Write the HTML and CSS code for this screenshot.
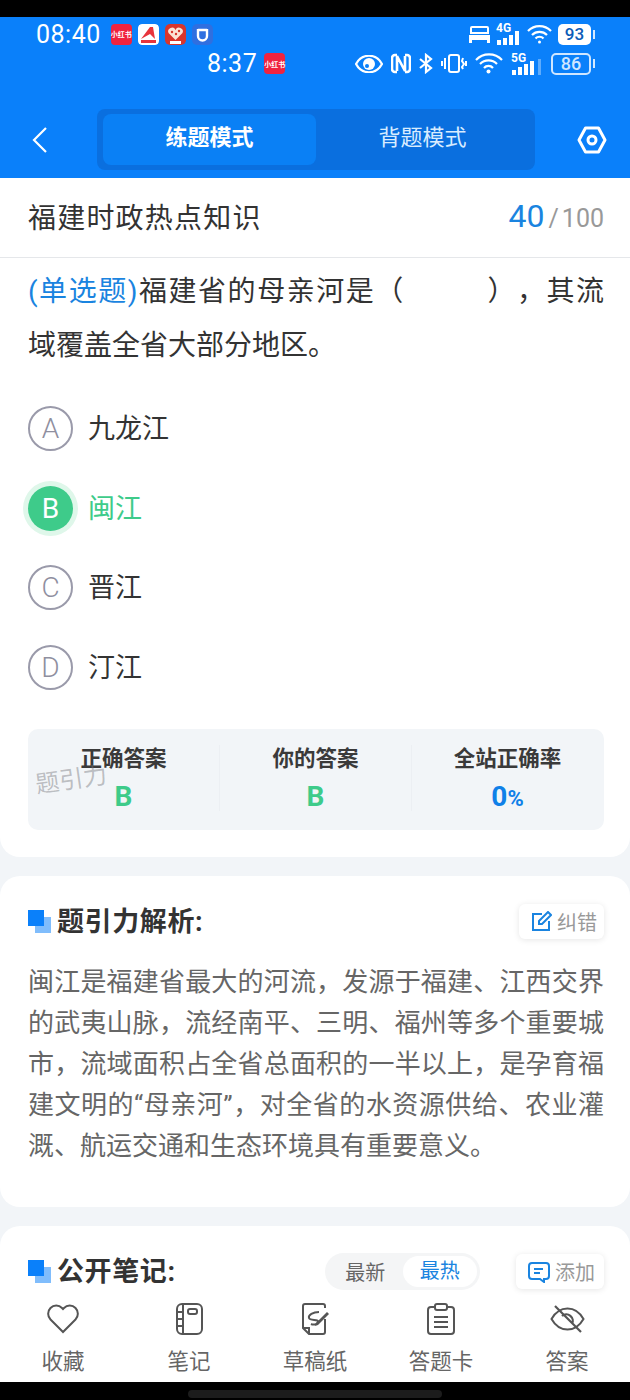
FILE: index.html
```html
<!DOCTYPE html>
<html lang="zh-CN">

<head>
    <meta charset="UTF-8">
    <meta name="viewport" content="width=device-width, initial-scale=1.0">
    <title>福建时政热点知识</title>
    <link rel="stylesheet" href="styles.css">
</head>

<body>
    <div class="black-top"></div>

    <!-- Blue header with the two status rows -->
    <div class="header">
        <div class="status-row first">
            <span class="clock">08:40</span>
            <span class="app-icon red">小红书</span>
            <svg class="app-icon" viewBox="0 0 21 21"><rect width="21" height="21" rx="4" fill="#fff"/><path d="M3 15 12 3h3l2 12-5-5z" fill="#e8343c"/><rect x="3" y="16" width="15" height="3" fill="#e8343c"/></svg>
            <svg class="app-icon" viewBox="0 0 21 21"><rect width="21" height="21" rx="5" fill="#d9352c"/><path d="M10.500 16 3.500 9a3.800 3.800 0 0 1 7-3 3.800 3.800 0 0 1 7 3z" fill="#fbe3d5"/><circle cx="7" cy="8" r="1.200" fill="#d9352c"/><circle cx="11" cy="10" r="1.200" fill="#d9352c"/><circle cx="14" cy="7" r="1.200" fill="#d9352c"/><rect x="5" y="17" width="11" height="3" fill="#fff"/></svg>
            <svg class="app-icon" viewBox="0 0 21 21"><rect width="21" height="21" rx="5" fill="#2f6fe0"/><path d="M6 5v7a4.500 4.500 0 0 0 9 0V5M6 6h9" fill="none" stroke="#fff" stroke-width="2.400"/></svg>
            <span class="status-right">
                <svg width="21" height="17" viewBox="0 0 21 17"><path d="M3 1h15a1 1 0 0 1 1 1v5H2V2a1 1 0 0 1 1-1z" fill="none" stroke="#fff" stroke-width="2"/><path d="M0 9h21v8h-3v-3H3v3H0z" fill="#fff"/></svg>
                <span class="signal">
                    <b>4G</b>
                    <svg width="25" height="14" viewBox="0 0 25 14"><rect x="1" y="9" width="4" height="5" fill="#fff"/><rect x="7" y="7" width="4" height="7" fill="#fff"/><rect x="13" y="4" width="4" height="10" fill="#fff"/><rect x="19" y="0" width="4" height="14" fill="#fff"/></svg>
                </span>
                <svg width="25" height="21" viewBox="0 0 25 21" fill="none" stroke="#fff" stroke-width="2.200"><path d="M1 7a16 16 0 0 1 23 0M5 11a10.500 10.500 0 0 1 15 0M8.500 14.500a5.500 5.500 0 0 1 8 0"/><circle cx="12.500" cy="18" r="1.500" fill="#fff" stroke="none"/></svg>
                <span class="battery-full">93</span>
            </span>
        </div>
        <div class="status-row second">
            <span class="clock">8:37</span>
            <span class="app-icon red">小红书</span>
            <span class="status-right">
                <svg width="28" height="18" viewBox="0 0 28 18"><path d="M1 9c6-11 20-11 26 0-6 11-20 11-26 0z" fill="none" stroke="#fff" stroke-width="2.200"/><circle cx="14" cy="9" r="6" fill="#fff"/><circle cx="12" cy="11" r="2" fill="#0a80fa"/></svg>
                <svg width="20" height="21" viewBox="0 0 20 21" fill="none" stroke="#fff" stroke-width="2.600"><path d="M6 2H4a3 3 0 0 0-3 3v11a3 3 0 0 0 3 3h2M14 2h2a3 3 0 0 1 3 3v11a3 3 0 0 1-3 3h-2M6 18V3l8 15V3"/></svg>
                <svg width="14" height="21" viewBox="0 0 14 21" fill="none" stroke="#fff" stroke-width="2.200"><path d="M1 6l11 9-5 4V2l5 4-11 9"/></svg>
                <svg width="26" height="21" viewBox="0 0 26 21" fill="none" stroke="#fff" stroke-width="2"><rect x="8" y="2" width="10" height="17" rx="2"/><path d="M4 5v11M1 8v5M22 5l-1 3 2 3-2 3 1 2M25 8v5"/></svg>
                <svg width="28" height="21" viewBox="0 0 28 21" fill="none" stroke="#fff" stroke-width="2.200"><path d="M1 7a18 18 0 0 1 26 0M5 11a12 12 0 0 1 17 0M9 15a6 6 0 0 1 9 0"/><circle cx="13.500" cy="18.500" r="2" fill="#fff" stroke="none"/></svg>
                <span class="signal wide">
                    <b>5G</b>
                    <svg width="32" height="16" viewBox="0 0 32 16"><rect x="1" y="11" width="4" height="5" fill="#fff"/><rect x="7" y="8" width="4" height="8" fill="#fff"/><rect x="13" y="5" width="4" height="11" fill="#fff"/><rect x="19" y="2" width="4" height="14" fill="#fff"/><rect x="27" y="0" width="3" height="16" fill="#fff" opacity=".35"/></svg>
                </span>
                <span class="battery-line">86</span>
            </span>
        </div>

        <div class="nav-row">
            <svg class="nav-icon" width="18" height="28" viewBox="0 0 18 28" fill="none" stroke="#fff" stroke-width="2.200"><path d="M15 2 3 14l12 12"/></svg>
            <div class="mode-switch">
                <div class="mode active">练题模式</div>
                <div class="mode">背题模式</div>
            </div>
            <svg class="nav-icon" width="30" height="28" viewBox="0 0 30 28" fill="none" stroke="#fff" stroke-width="3"><path d="M8.500 2h13L28 14l-6.500 12h-13L2 14z" stroke-linejoin="round"/><circle cx="15" cy="14" r="4"/></svg>
        </div>
    </div>

    <div class="title-bar">
        <span class="title">福建时政热点知识</span>
        <span class="progress"><em>40</em><i>/</i>100</span>
    </div>

    <div class="main">
        <!-- Question -->
        <div class="card question-card">
            <p class="question"><span class="q-type">(单选题)</span>福建省的母亲河是（<span class="blank"></span>），其流域覆盖全省大部分地区。</p>

            <div class="options">
                <div class="option"><span class="letter">A</span><span class="opt-text">九龙江</span></div>
                <div class="option correct"><span class="letter">B</span><span class="opt-text">闽江</span></div>
                <div class="option"><span class="letter">C</span><span class="opt-text">晋江</span></div>
                <div class="option"><span class="letter">D</span><span class="opt-text">汀江</span></div>
            </div>

            <div class="stats">
                <div class="stat">
                    <div class="stat-label">正确答案</div>
                    <div class="stat-value green">B</div>
                </div>
                <div class="stat">
                    <div class="stat-label">你的答案</div>
                    <div class="stat-value green">B</div>
                </div>
                <div class="stat">
                    <div class="stat-label">全站正确率</div>
                    <div class="stat-value blue">0<small>%</small></div>
                </div>
                <div class="watermark">题引力</div>
            </div>
        </div>

        <!-- Analysis -->
        <div class="card analysis-card">
            <div class="card-head">
                <h2><span class="mark"></span>题引力解析:</h2>
                <div class="small-btn">
                    <svg width="21" height="21" viewBox="0 0 21 21" fill="none" stroke="#1a84e0" stroke-width="2"><path d="M11 3H2v16h16v-9M8 10l9-9 3 3-9 9H8z"/></svg>
                    纠错
                </div>
            </div>
            <p class="analysis">闽江是福建省最大的河流，发源于福建、江西交界的武夷山脉，流经南平、三明、福州等多个重要城市，流域面积占全省总面积的一半以上，是孕育福建文明的“母亲河”，对全省的水资源供给、农业灌溉、航运交通和生态环境具有重要意义。</p>
        </div>

        <!-- Notes -->
        <div class="card notes-card">
            <div class="card-head">
                <h2><span class="mark"></span>公开笔记:</h2>
                <div class="notes-tools">
                    <div class="sort">
                        <span>最新</span>
                        <span class="on">最热</span>
                    </div>
                    <div class="small-btn wide">
                        <svg width="22" height="22" viewBox="0 0 22 22" fill="none" stroke="#1a84e0" stroke-width="2"><path d="M4 2h14a3 3 0 0 1 3 3v10a3 3 0 0 1-3 3h-2v3l-4-3H4a3 3 0 0 1-3-3V5a3 3 0 0 1 3-3zM6 8h9M6 12h6"/></svg>
                        添加
                    </div>
                </div>
            </div>
        </div>
    </div>

    <!-- Bottom tabs -->
    <div class="tabbar">
        <div class="tab">
            <svg width="32" height="30" viewBox="0 0 32 30" fill="none" stroke="#555" stroke-width="2"><path d="M16 28 3.500 15.500a8.200 8.200 0 0 1 0-11.500 8 8 0 0 1 11.500 0l1 1 1-1a8 8 0 0 1 11.500 0 8.200 8.200 0 0 1 0 11.500z"/></svg>
            收藏
        </div>
        <div class="tab">
            <svg width="27" height="32" viewBox="0 0 27 32" fill="none" stroke="#555" stroke-width="2"><rect x="1" y="1" width="25" height="30" rx="5"/><path d="M7 1v30M1 9h6M1 16h6M1 23h6"/><rect x="12" y="6" width="9" height="5" rx="2"/></svg>
            笔记
        </div>
        <div class="tab">
            <svg width="30" height="32" viewBox="0 0 30 32" fill="none" stroke="#555" stroke-width="2"><path d="M25 16v13a2 2 0 0 1-2 2H9l-6-6V3a2 2 0 0 1 2-2h18a2 2 0 0 1 2 2v2M3 25h6v6"/><path d="M19 9c-6 0-11 3-10 6s10 1 9 4-5 3-7 2"/><path d="M16 20 27 9l2 2-11 11-3 1z" fill="#555" stroke="none"/></svg>
            草稿纸
        </div>
        <div class="tab">
            <svg width="28" height="32" viewBox="0 0 28 32" fill="none" stroke="#555" stroke-width="2"><path d="M8 4H4a3 3 0 0 0-3 3v21a3 3 0 0 0 3 3h20a3 3 0 0 0 3-3V7a3 3 0 0 0-3-3h-4"/><rect x="8" y="1" width="12" height="6" rx="2"/><path d="M7 14h14M7 19h14M7 24h14"/></svg>
            答题卡
        </div>
        <div class="tab">
            <svg width="35" height="30" viewBox="0 0 35 30" fill="none" stroke="#555" stroke-width="2"><path d="M1.500 15c8-14 24-14 32 0-8 14-24 14-32 0z"/><path d="M12 12a6.500 6.500 0 0 1 10 8M5 2l26 26" stroke-width="2.200"/></svg>
            答案
        </div>
    </div>

    <div class="black-bottom"><span class="home-bar"></span></div>
</body>

</html>
```

FILE: styles.css
```css
* {
    box-sizing: border-box;
}

body {
    width: 630px;
    height: 1400px;
    margin: 0;
    overflow: hidden;
    display: flex;
    flex-direction: column;
    font-family: Roboto, "Noto Sans CJK SC", sans-serif;
    background-color: #f2f5f8;
    color: #333;
}

.black-top {
    height: 17px;
    background: #000;
}

.header {
    height: 161px;
    background: #0a80fa;
    color: #fff;
}

.status-row {
    display: flex;
    align-items: center;
}

.status-row.first {
    height: 33px;
    padding: 1px 36px 0;
}

.status-row.second {
    height: 27px;
    padding: 0 34px 0 207px;
}

.clock {
    font-size: 25px;
    line-height: 1;
    margin-right: 10px;
    letter-spacing: .5px;
}

.second .clock {
    margin-right: 7px;
}

.app-icon {
    width: 21px;
    height: 21px;
    margin-right: 6px;
    border-radius: 4px;
    flex-shrink: 0;
}

.app-icon.red {
    display: flex;
    align-items: center;
    justify-content: center;
    background: #f0233f;
    font-size: 7px;
    font-weight: bold;
    white-space: nowrap;
}

.status-right {
    margin-left: auto;
    display: flex;
    align-items: center;
    gap: 8px;
}

.first .status-right {
    gap: 6px;
}

.signal {
    position: relative;
    display: flex;
    align-items: flex-end;
    width: 25px;
    height: 22px;
}

.signal b {
    position: absolute;
    left: 0;
    top: -1px;
    font-size: 12px;
    line-height: 12px;
}

.signal.wide {
    width: 32px;
}

.battery-full,
.battery-line {
    position: relative;
    display: block;
    font-weight: 500;
    text-align: center;
    border-radius: 5px;
}

.battery-full {
    width: 33px;
    height: 21px;
    margin-right: 3px;
    background: #fff;
    color: #0b5cb8;
    font-size: 17px;
    line-height: 21px;
}

.battery-line {
    width: 40px;
    height: 22px;
    margin-right: 5px;
    border: 2px solid #cfe6ff;
    color: #cfe6ff;
    font-size: 18px;
    line-height: 18px;
}

.battery-full::after,
.battery-line::after {
    content: "";
    position: absolute;
    top: 6px;
    right: -4px;
    width: 2px;
    height: 9px;
    background: #d4e9ff;
}

.battery-line::after {
    top: 4px;
    right: -6px;
}

.nav-row {
    display: flex;
    align-items: center;
    margin-top: 32px;
    padding: 0 22px 0 31px;
}

.nav-row .nav-icon {
    flex-shrink: 0;
}

.mode-switch {
    display: flex;
    width: 438px;
    height: 61px;
    margin: 0 42px 0 48px;
    padding: 5px 6px;
    border-radius: 8px;
    background: #0a6fdf;
}

.mode {
    flex: 1;
    text-align: center;
    font-size: 22px;
    line-height: 47px;
    color: #d8ecff;
}

.mode.active {
    background: #0a80f5;
    border-radius: 8px;
    color: #fff;
    font-weight: bold;
}

.title-bar {
    display: flex;
    align-items: center;
    justify-content: space-between;
    height: 80px;
    padding: 0 26px 4px 28px;
    background: #fff;
    border-bottom: 1px solid #e5e7ea;
}

.title {
    font-size: 28px;
    letter-spacing: 1.200px;
    color: #333;
}

.progress {
    font-size: 25px;
    color: #999;
}

.progress em {
    font-style: normal;
    font-size: 32px;
    color: #1a84e0;
}

.progress i {
    font-style: normal;
    margin: 0 3px 0 4px;
}

.main {
    flex: 1;
    overflow: hidden;
}

.card {
    background: #fff;
    padding: 0 26px 0 28px;
    border-radius: 20px;
    margin-bottom: 19px;
}

.question-card {
    padding-top: 7px;
    padding-bottom: 27px;
    border-radius: 0 0 20px 20px;
}

.question {
    margin: 0;
    font-size: 28px;
    line-height: 54px;
    text-align: justify;
    text-spacing-trim: space-all;
    color: #333;
}

.q-type {
    color: #1a84e0;
}

.blank {
    display: inline-block;
    width: 81px;
}

.options {
    margin-top: 16px;
}

.option {
    display: flex;
    align-items: center;
    height: 79.5px;
    font-size: 27px;
    color: #333;
}

.opt-text {
    margin-top: -4px;
}

.letter {
    display: flex;
    align-items: center;
    justify-content: center;
    width: 45px;
    height: 45px;
    margin-right: 15px;
    border: 2px solid #9a9aaa;
    border-radius: 50%;
    font-size: 28px;
    font-weight: 300;
    color: #8f8f9f;
}

.option.correct {
    color: #3ecb8a;
}

.option.correct .letter {
    border: none;
    background: #3ecb8a;
    color: #fff;
    font-weight: 400;
    box-shadow: 0 0 0 5px #dff7ea;
}

.stats {
    position: relative;
    display: flex;
    height: 101px;
    margin-top: 22px;
    padding-top: 16px;
    border-radius: 10px;
    background: #f2f5f8;
}

.stat {
    width: 192px;
    height: 66px;
    text-align: center;
    border-left: 1px solid #eceff3;
}

.stat:first-child {
    width: 191px;
    border-left: none;
}

.stat-label {
    font-size: 21.500px;
    line-height: 28px;
    font-weight: bold;
    color: #3a3a3a;
}

.stat-value {
    margin-top: 7px;
    font-size: 28px;
    line-height: 34px;
    font-weight: bold;
}

.stat-value small {
    font-size: 22px;
}

.green {
    color: #3ecb8a;
}

.blue {
    color: #0f80e8;
}

.watermark {
    position: absolute;
    left: 7px;
    top: 31px;
    font-size: 24px;
    color: rgba(120, 120, 125, .45);
    transform: rotate(-8deg);
}

.card-head {
    display: flex;
    align-items: center;
    justify-content: space-between;
}

.card-head h2 {
    display: flex;
    align-items: center;
    height: 30px;
    margin: 0 0 5px;
    font-size: 27px;
    font-weight: bold;
    letter-spacing: .6px;
    color: #333;
}

.mark {
    width: 16px;
    height: 16px;
    margin: 0 13px 3px 0;
    background: #0a80fa;
    box-shadow: 7px 7px 0 #80bdfc;
}

.small-btn {
    display: flex;
    align-items: center;
    gap: 5px;
    height: 35px;
    padding: 0 7px 0 12px;
    font-size: 20px;
    color: #999;
    background: #fff;
    border-radius: 6px;
    box-shadow: 0 1px 6px rgba(0, 0, 0, .1);
}

.small-btn.wide {
    width: 88px;
}

.analysis-card {
    height: 331px;
    padding-top: 28px;
}

.analysis {
    margin: 23px 0 0;
    font-size: 26px;
    line-height: 41px;
    text-align: justify;
    color: #666;
}

.notes-card {
    padding-top: 27px;
    height: 120px;
}

.notes-tools {
    display: flex;
    align-items: center;
    gap: 36px;
}

.sort {
    display: flex;
    align-items: center;
    width: 155px;
    height: 37px;
    padding: 3px;
    border-radius: 19px;
    background: #f4f5f6;
    font-size: 20px;
    color: #666;
}

.sort span {
    flex: 1;
    text-align: center;
}

.sort .on {
    line-height: 31px;
    border-radius: 16px;
    background: #fff;
    color: #1a84e0;
}

.tabbar {
    display: flex;
    height: 87px;
    padding-top: 8px;
    background: #fff;
    margin-top: -1px;
}

.tab {
    flex: 1;
    display: flex;
    flex-direction: column;
    align-items: center;
    font-size: 21.500px;
    color: #666;
}

.tab svg {
    height: 32px;
    margin-bottom: 9px;
}

.black-bottom {
    position: relative;
    height: 18px;
    background: #000;
    display: flex;
    justify-content: center;
    align-items: flex-end;
}

.home-bar {
    width: 254px;
    height: 8px;
    margin-bottom: 2px;
    border-radius: 4px;
    background: #1c1c1c;
}
```
